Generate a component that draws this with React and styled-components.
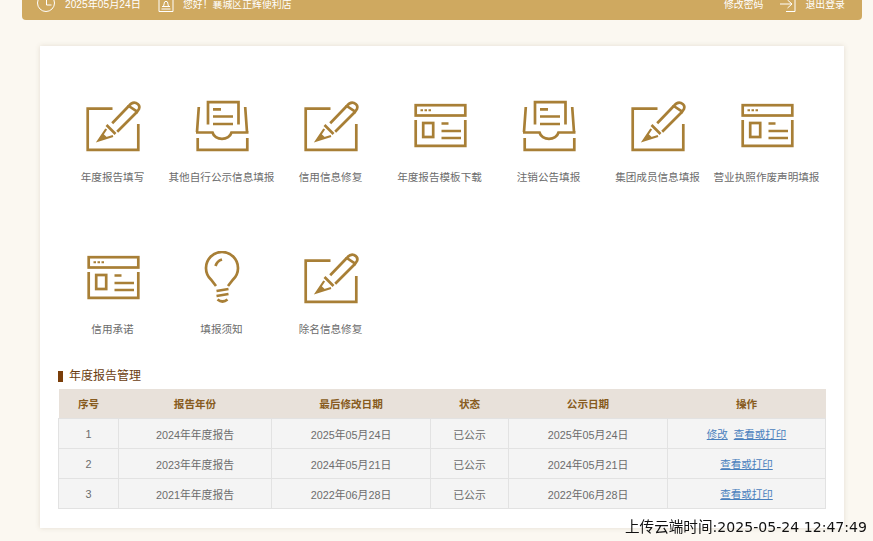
import React from "react";
import styled, { createGlobalStyle } from "styled-components";

const Global = createGlobalStyle`
  html, body { margin: 0; padding: 0; height: 100%; overflow: hidden; background: #fbf8f1; }
  body { font-family: "Liberation Sans", "Noto Sans CJK SC", sans-serif; }
`;

const Page = styled.div`
  width: 873px;
  height: 541px;
  overflow: hidden;
`;

const TopBar = styled.header`
  display: flex;
  align-items: flex-start;
  box-sizing: border-box;
  width: 840px;
  height: 20px;
  margin-left: 22px;
  padding: 0 17px 0 14px;
  overflow: hidden;
  background: #cfa960;
  border-radius: 0 0 4px 4px;
  color: #fff;
`;

const BarIcon = styled.svg`
  flex: none;
  width: 20px;
  height: 20px;
  fill: none;
  stroke: #fff;
  stroke-width: 1;
  margin-left: ${(p) => p.$left || 0}px;
  margin-right: ${(p) => p.$right || 0}px;
`;

const BarText = styled.span`
  font-size: ${(p) => p.$size || 9.9}px;
  line-height: 10px;
  height: 10px;
  white-space: nowrap;
`;

const BarRight = styled.div`
  display: flex;
  align-items: flex-start;
  margin-left: auto;
`;

const Card = styled.main`
  box-sizing: border-box;
  width: 804px;
  margin: 26px 0 0 40px;
  padding: 53px 18px 19px;
  background: #fff;
  box-shadow: 0 0 5px rgba(120, 100, 70, 0.18);
`;

const IconGrid = styled.nav`
  display: grid;
  grid-template-columns: repeat(7, 109px);
  row-gap: 66px;
`;

const Tile = styled.a`
  display: flex;
  flex-direction: column;
  align-items: center;
  height: 86px;
  color: #6c6c6c;
  text-decoration: none;
`;

const TileIcon = styled.svg`
  display: block;
  width: 60px;
  height: 56px;
  fill: none;
  stroke: #a87f36;
  stroke-width: 2.7;
`;

const TileLabel = styled.span`
  margin-top: 14px;
  font-size: 10.6px;
  line-height: 16px;
  white-space: nowrap;
`;

const SectionTitle = styled.h2`
  display: flex;
  align-items: center;
  margin: 31px 0 5px;
  font-size: 12px;
  line-height: 16px;
  font-weight: 400;
  color: #6b3d10;

  &::before {
    content: "";
    width: 5px;
    height: 11px;
    margin-right: 6px;
    background: #7a3e0a;
  }
`;

const Table = styled.table`
  width: 767px;
  table-layout: fixed;
  border-collapse: collapse;
  font-size: 10.8px;
`;

const Col = styled.col`
  width: ${(p) => p.$w}px;
`;

const Th = styled.th`
  height: 29px;
  padding: 0;
  background: #e8e1da;
  color: #875b20;
  font-size: 10.6px;
  font-weight: 700;
  text-align: center;
`;

const Td = styled.td`
  height: 29px;
  padding: 0;
  background: #f4f4f4;
  border: 1px solid #e2e2e2;
  color: #6c6c6c;
  text-align: center;
`;

const ActionLink = styled.a`
  color: #4a80bd;
  font-size: 10.5px;
  text-decoration: underline;
  margin: 0 3px;
`;

const Stamp = styled.div`
  position: fixed;
  right: 6px;
  bottom: 4px;
  font-family: "DejaVu Sans", "Noto Sans CJK SC", sans-serif;
  font-size: 14.1px;
  line-height: 20px;
  color: #111;
  white-space: nowrap;
`;

const StampLabel = styled.span`
  font-size: 14.6px;
`;

const Pencil = () => (
  <TileIcon viewBox="0 0 60 56">
    <path d="M29.5 9.7H4.7V50.8H55.3V25" />
    <path d="M29.2 24.3L45.8 7M34.2 32.7L54.2 12.7" />
    <path d="M45.8 7Q49 2.8 53 4Q57.5 6 56 10L54.2 12.7Z" />
    <path d="M23.5 26L32.5 35" />
    <path d="M23.2 30L15.5 41.5L30 37" strokeWidth="2.2" />
    <path d="M15 42L20 34.5L24.5 38.8Z" fill="#a87f36" stroke="none" />
  </TileIcon>
);

const Tray = () => (
  <TileIcon viewBox="0 0 60 56">
    <path d="M16 25.5V3.2H46.5V25.5" />
    <path d="M21 10.3H29M21 17.5H41M21 25H41" />
    <path d="M6.8 8L5 33M53.2 8L55 33" />
    <path d="M4 33.5H20.5A9.8 8.5 0 0 0 39.5 33.5H56.5" />
    <path d="M5.7 39V50.8H55.3V39" />
  </TileIcon>
);

const Browser = () => (
  <TileIcon viewBox="0 0 60 56">
    <rect x="5.7" y="6.2" width="49.6" height="10.3" />
    <path d="M5.7 21V46.8H55.3V21" />
    <rect x="13.2" y="24" width="10" height="14" />
    <path d="M31.5 24.5H38.5M31.5 32H51M31.5 39H51" />
    <path d="M10.5 11.3H13M14.5 11.3H17M18.5 11.3H21" strokeWidth="2" />
  </TileIcon>
);

const Bulb = () => (
  <TileIcon viewBox="0 0 60 56">
    <path d="M24 35L18.9 28.5A16 16 0 1 1 41.1 28.5L36 35" />
    <path d="M23.5 15Q25 10 30 8.5" />
    <path d="M24.5 40L36.5 38M24.5 45L36.5 43" />
    <path d="M25.5 48.5Q30.5 52.5 35.5 48.5" />
  </TileIcon>
);

const tiles = [
  ["年度报告填写", Pencil],
  ["其他自行公示信息填报", Tray],
  ["信用信息修复", Pencil],
  ["年度报告模板下载", Browser],
  ["注销公告填报", Tray],
  ["集团成员信息填报", Pencil],
  ["营业执照作废声明填报", Browser],
  ["信用承诺", Browser],
  ["填报须知", Bulb],
  ["除名信息修复", Pencil],
];

const rows = [
  ["1", "2024年年度报告", "2025年05月24日", "已公示", "2025年05月24日", true],
  ["2", "2023年年度报告", "2024年05月21日", "已公示", "2024年05月21日", false],
  ["3", "2021年年度报告", "2022年06月28日", "已公示", "2022年06月28日", false],
];

const widths = [60, 153, 159, 78, 159, 158];
const heads = ["序号", "报告年份", "最后修改日期", "状态", "公示日期", "操作"];

export default function App() {
  return (
    <Page>
      <Global />
      <TopBar>
        <BarIcon viewBox="0 0 20 20" $left={0} $right={9}>
          <circle cx="10" cy="3" r="8.5" />
          <path d="M10.5 -2V5H15.5" />
        </BarIcon>
        <BarText $size={10.2}>2025年05月24日</BarText>
        <BarIcon viewBox="0 0 20 20" $left={15} $right={7}>
          <path d="M3 -2V11.5H17V-2" />
          <path d="M5.5 9H14.5M6 6.5H14M7.5 6.5L8.5 2Q10 0.5 11.5 2L12.5 6.5" />
        </BarIcon>
        <BarText>您好！襄城区正辉便利店</BarText>
        <BarRight>
          <BarText>修改密码</BarText>
          <BarIcon viewBox="0 0 20 20" $left={15} $right={7}>
            <path d="M2 4H13M9.5 0L14 4L9.5 8" />
            <path d="M8 11.5H17V-3" />
          </BarIcon>
          <BarText>退出登录</BarText>
        </BarRight>
      </TopBar>
      <Card>
        <IconGrid>
          {tiles.map(([label, Icon]) => (
            <Tile key={label}>
              <Icon />
              <TileLabel>{label}</TileLabel>
            </Tile>
          ))}
        </IconGrid>
        <SectionTitle>年度报告管理</SectionTitle>
        <Table>
          <colgroup>
            {widths.map((w, i) => (
              <Col key={i} $w={w} />
            ))}
          </colgroup>
          <thead>
            <tr>
              {heads.map((h) => (
                <Th key={h}>{h}</Th>
              ))}
            </tr>
          </thead>
          <tbody>
            {rows.map((r) => (
              <tr key={r[0]}>
                <Td>{r[0]}</Td>
                <Td>{r[1]}</Td>
                <Td>{r[2]}</Td>
                <Td>{r[3]}</Td>
                <Td>{r[4]}</Td>
                <Td>
                  {r[5] && <ActionLink>修改</ActionLink>}
                  <ActionLink>查看或打印</ActionLink>
                </Td>
              </tr>
            ))}
          </tbody>
        </Table>
      </Card>
      <Stamp>
        <StampLabel>上传云端时间</StampLabel>:2025-05-24 12:47:49
      </Stamp>
    </Page>
  );
}
